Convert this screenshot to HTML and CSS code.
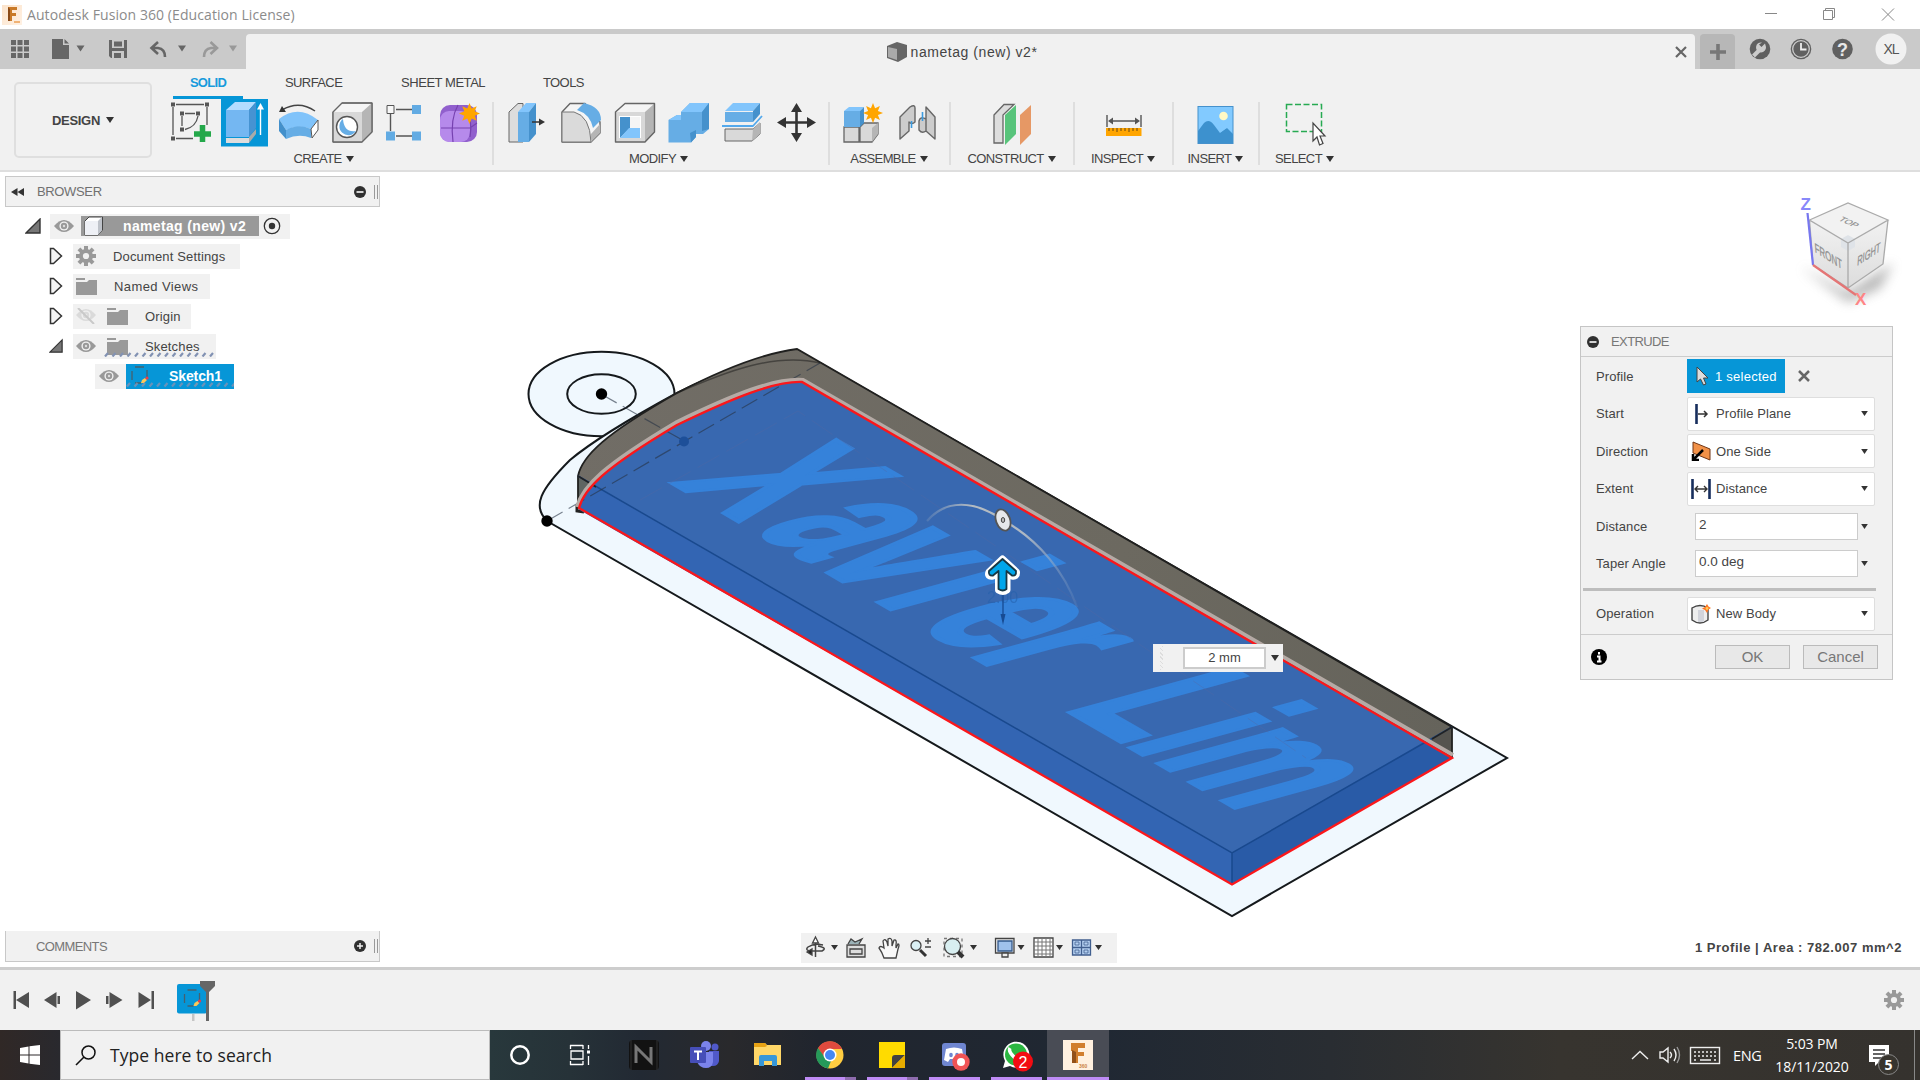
FILE: index.html
```html
<!DOCTYPE html>
<html lang="en">
<head>
<meta charset="utf-8">
<title>Autodesk Fusion 360 (Education License)</title>
<link rel="stylesheet" href="styles.css">
</head>
<body>
<svg class="defs" width="0" height="0">
  <defs>
    <symbol id="eye" viewBox="0 0 20 14"><path d="M0 7Q10-5 20 7Q10 19 0 7Z" fill="#999"/><circle cx="10" cy="7" r="4.6" fill="#f1f1f1"/><circle cx="10" cy="7" r="3.2" fill="#999"/><circle cx="10" cy="7" r="1.2" fill="#ddd"/></symbol>
    <symbol id="folder" viewBox="0 0 21 17"><path d="M0 0H9V2H0ZM0 4H11L13 2H21V17H0Z" fill="#999"/></symbol>
    <symbol id="gear" viewBox="-10 -10 20 20"><g fill="#999"><g id="teeth"><rect x="-2" y="-10" width="4" height="20"/><rect x="-10" y="-2" width="20" height="4"/></g><use href="#teeth" transform="rotate(45)"/><circle r="7"/></g><circle r="3.1" fill="#f1f1f1"/></symbol>
    <symbol id="closed" viewBox="0 0 14 18"><path d="M1.5 1.5H4.5L12.5 9L4.5 16.5H1.5Z" fill="#f4f4f4" stroke="#333" stroke-width="1.5"/></symbol>
    <symbol id="open" viewBox="0 0 16 16"><path d="M15 1V15H1Z" fill="#777" stroke="#333" stroke-width="1.4"/></symbol>
    <symbol id="down" viewBox="0 0 8 6"><path d="M0 0H8L4 6Z" fill="#333"/></symbol>
    <symbol id="minus" viewBox="0 0 12 12"><circle cx="6" cy="6" r="6" fill="#303030"/><path d="M2.5 6H9.5" stroke="#f1f1f1" stroke-width="1.7"/></symbol>
    <symbol id="plus" viewBox="0 0 12 12"><circle cx="6" cy="6" r="6" fill="#303030"/><path d="M3 6H9M6 3V9" stroke="#f1f1f1" stroke-width="1.5"/></symbol>
    <symbol id="star" viewBox="-11 -11 22 22"><path d="M0-11L2.3-5.3L7.6-7.6L5.4-2.3L11 0L5.4 2.3L7.6 7.6L2.3 5.3L0 11L-2.3 5.3L-7.6 7.6L-5.4 2.3L-11 0L-5.4-2.3L-7.6-7.6L-2.3-5.3Z" fill="#ffa500"/></symbol>
    <symbol id="sketch" viewBox="0 0 20 20"><path d="M2 5V14M5 1H14M17 4V11M5 17H11" fill="none" stroke="#46606e" stroke-width="1.3"/><path d="M11 17L12 14L15 12L17 14L14 17Z" fill="#ffc857"/><circle cx="17" cy="12" r="1.600" fill="#ed3b4b"/></symbol>
    <symbol id="hatch" viewBox="0 0 110 5"><path d="M2 4.500H112" stroke="#8292b3" stroke-width="0"/><path d="M1 4.500L4 1M8.500 4.500L11.500 1M16 4.500L19 1M23.500 4.500L26.500 1M31 4.500L34 1M38.500 4.500L41.500 1M46 4.500L49 1M53.500 4.500L56.500 1M61 4.500L64 1M68.500 4.500L71.500 1M76 4.500L79 1M83.500 4.500L86.500 1M91 4.500L94 1M98.500 4.500L101.500 1M106 4.500L109 1" stroke="#8292b3" stroke-width="2.200"/></symbol>
  </defs>
</svg>

<header class="titlebar">
  <svg width="20" height="20"><defs><linearGradient id="fbg" x2="1" y2="1"><stop stop-color="#fbe3cb"/><stop offset="1" stop-color="#fff1e3"/></linearGradient></defs><rect width="20" height="20" fill="url(#fbg)"/><path d="M6 2H15V5H10V8H14V11H10V16H6Z" fill="#c97a28"/><path d="M6 2L8 4V16H6Z" fill="#8a4a18"/><path d="M12 17H18" stroke="#f0b275" stroke-width="2"/></svg>
  <span class="app-name">Autodesk Fusion 360 (Education License)</span>
  <svg class="window-buttons" width="132" height="29" viewBox="1764 0 132 29" fill="none" stroke="#888"><path d="M1765 13.5H1777M1882 8.5L1894 20.5M1894 8.5L1882 20.5M1823.5 10.5H1832.5V19.5H1823.5ZM1825.5 10.5V8.5H1834.5V17.5H1832.5"/></svg>
</header>

<nav class="tabbar">
  <svg width="246" height="40" viewBox="0 29 246 40" fill="#666">
    <g><path d="M11 40h5v5h-5zM17.500 40h5v5h-5zM24 40h5v5h-5zM11 46.500h5v5h-5zM17.500 46.500h5v5h-5zM24 46.500h5v5h-5zM11 53h5v5h-5zM17.500 53h5v5h-5zM24 53h5v5h-5z"/></g>
    <path d="M52 39H63V45H69V59H52ZM64.500 39L69 43.500H64.500Z"/><path d="M76.500 45.500H84.500L80.500 51.500ZM178 45.500H186L182 51.500Z"/>
    <path fill-rule="evenodd" d="M109 40H127V58H111L109 56ZM112 40V48H124V40ZM114 41.500H122V46.500H114ZM112 51V58H124V51ZM114 53H121V58H114Z"/><rect x="115.500" y="54" width="2.500" height="4"/>
    <g fill="none" stroke="#666" stroke-width="2.600"><path d="M151 48H158Q165 49 165 57M158 42L151.500 48L158 54"/><path d="M217 48H211Q204 49 204 57M210.500 42L217 48L210.500 54" stroke="#999"/></g><path d="M229 45.500H237L233 51.500Z" fill="#999"/>
  </svg>
  <div class="doc-tab">
    <span class="doc-title"><svg width="20" height="20"><path d="M0 4L10 0L20 3V15L11 20L0 16Z" fill="#666"/><path d="M1 5L10 7V18L1 15Z" fill="#aaa"/></svg>nametag (new) v2*</span>
    <svg class="tab-x" width="12" height="12"><path d="M1 1L11 11M11 1L1 11" stroke="#666" stroke-width="2.200"/></svg>
  </div>
  <div class="new-tab"><svg width="16" height="16"><path d="M8 0V16M0 8H16" stroke="#777" stroke-width="3.600"/></svg></div>
  <svg width="185" height="40" viewBox="1735 29 185 40"><g fill="#606060"><circle cx="1760" cy="49" r="10.300"/><circle cx="1801" cy="49" r="10.300"/><circle cx="1842.500" cy="49" r="10.300"/></g>
    <path d="M1753.500 56L1760 49.500" stroke="#ccc" stroke-width="4"/><path d="M1765 43.500L1761.500 47L1759 44.500L1762 42.500A5 5 0 1 0 1766 47Z" fill="#ccc"/><circle cx="1801" cy="49" r="8.300" fill="none" stroke="#ccc" stroke-width="1.300"/><path d="M1801 43V49.500H1806.500" fill="none" stroke="#eee" stroke-width="1.800"/><text class="help-mark" x="1842.500" y="56" text-anchor="middle">?</text><circle cx="1891" cy="49" r="15.500" fill="#f1f1f1"/><text class="user" x="1891" y="54" text-anchor="middle">XL</text></svg>
</nav>

<section class="ribbon">
  <button class="workspace">DESIGN <svg width="8" height="6"><use href="#down"/></svg></button>
  <div class="ribbon-main">
    <div class="ribbon-tabs"><span class="active">SOLID</span><span class="t2">SURFACE</span><span class="t3">SHEET METAL</span><span class="t4">TOOLS</span></div>
    <div class="groups">
      <div class="group create"><svg width="332" height="52" viewBox="160 97 332 52">
        <rect x="221" y="99" width="47" height="47.500" fill="#0696d7"/>
        <g fill="none" stroke="#555" stroke-width="1.300"><path d="M176 104.500H204M173 107V135M176 138.500H193M207 107V125M185 113.500H195M182 116V126M198 116Q196 127 185 129.500"/></g>
        <path d="M171 102.500h4v4h-4zM205 102.500h4v4h-4zM171 136.500h4v4h-4zM180 111.500h4v4h-4zM196 111.500h4v4h-4zM180 127.500h4v4h-4z" fill="#555"/><path d="M194 134H211M202.500 125V142" stroke="#24a84a" stroke-width="5.500"/>
        <path d="M226 110L235 102H256L249 110Z" fill="#b3dcff"/><path d="M226 110H249V137H226Z" fill="#74b7f2"/><path d="M249 110L256 102V128L249 137Z" fill="#4693d2"/><path d="M226 138H249V143H226Z" fill="#ddd"/><path d="M249 137L256 129V134L249 143Z" fill="#aaa"/><path d="M260.500 135V108" stroke="#fff" stroke-width="1.400"/><path d="M257 109.500H264L260.500 103Z" fill="#fff"/>
        <path d="M279 119Q298 104 318 120L311 129Q299 124 286 130Z" fill="#80c3fa"/><path d="M279 119L286 130V139L279 131Z" fill="#4390cb"/><path d="M286 130Q299 123 311 129V138Q299 133 286 139Z" fill="#66ade5"/><path d="M311 129L318 120V130L312 138Z" fill="#fff" stroke="#555"/><path d="M282 110Q299 100 315 111" fill="none" stroke="#444" stroke-width="1.500"/><path d="M279 112L282 106L286 112Z" fill="#333"/>
        <g stroke="#666" stroke-linejoin="round"><path d="M333 112L342 103H372V132L362 142H333Z" fill="#f5f5f5"/><path d="M333 112H362V142H333Z" fill="#d8d8d8" stroke="none"/><path d="M362 112L372 103V132L362 142Z" fill="#b5b5b5" stroke="none"/><path d="M333 112L342 103H372V132L362 142H333Z" fill="none" stroke-width="1.400"/></g><circle cx="347" cy="127" r="10.500" fill="#fff" stroke="#555" stroke-width="1.400"/><path d="M343 119A9 9 0 1 0 356 131Q344 133 343 119Z" fill="#66ade5"/>
        <path d="M390.500 114V131M396 109.500H412M396 136H412" stroke="#555" stroke-width="1.400"/><path d="M387 105.500h7v8h-7z" fill="#f7f7f7" stroke="#555"/><path d="M412 105h9v9h-9zM386 131.500h9v9h-9zM412 131.500h9v9h-9z" fill="#62abe3"/>
        <rect x="440" y="105" width="37" height="37" rx="10" fill="#9160cd"/><rect x="440" y="111" width="30" height="31" rx="9" fill="#b68aeb"/><path d="M441 128H470L477 123M453 142Q450 119 458 105M470 137Q473 119 465 108" fill="none" stroke="#7642b0" stroke-width="1.200"/><use href="#star" x="459" y="103" width="21" height="21"/>
      </svg><b>CREATE <svg width="8" height="6"><use href="#down"/></svg></b></div>
      <div class="group modify"><svg width="334" height="52" viewBox="494 97 334 52" stroke-linejoin="round">
        <path d="M509 112L518 103.500H523V142H509Z" fill="#ddd" stroke="#666"/><path d="M518 112H529V142H518Z" fill="#66ade5"/><path d="M518 112L526 103H536L529 112Z" fill="#82c5fc"/><path d="M529 112L536 103V134L529 142Z" fill="#4591cc"/><path d="M532 122H540" stroke="#333" stroke-width="1.500"/><path d="M539 118.500L545 122L539 125.500Z" fill="#333"/>
        <path d="M562 112L570 103.500H585L600 122V133L591 142H562Z" fill="#f5f5f5" stroke="#666" stroke-width="1.400"/><path d="M562 112H574Q590 116 591 142H562Z" fill="#dadada" stroke="#777"/><path d="M591 142V134L600 124V133Z" fill="#b5b5b5"/><path d="M577 110L584 103Q601 107 601 120L593 128Q590 114 577 110Z" fill="#66ade5"/>
        <path d="M615.500 112L625 103.500H654.500V132L645 142H615.500Z" fill="#f5f5f5"/><path d="M615.500 112H645V142H615.500Z" fill="#d8d8d8"/><path d="M645 112L654.500 103.500V132L645 142Z" fill="#b5b5b5"/><path d="M615.500 112L625 103.500H654.500V132L645 142H615.500Z" fill="none" stroke="#666" stroke-width="1.400"/><rect x="619" y="116" width="22" height="22" fill="#fff"/><path d="M620 117H630V128L620 138Z" fill="#4591cc"/><path d="M620 138L629 128H640V138Z" fill="#82c5fc"/><path d="M630 117H640V128H630Z" fill="#f5f5f5"/>
        <path d="M668.500 120L677 115H681V112L690 103H709V129L703 134H696V137L691 142.500H668.500Z" fill="#66ade5"/><path d="M681 112L690 103H709L702 112ZM668.500 120L677 115H681V120Z" fill="#82c5fc"/><path d="M702 112L709 103V129L702 131ZM690 133L696 130V137L691 142.500Z" fill="#4591cc"/>
        <path d="M725 112H753V122H725Z" fill="#66ade5"/><path d="M725 111L733 103H760L753 111Z" fill="#82c5fc"/><path d="M753 111L760 103V114L753 122Z" fill="#4591cc"/><path d="M722 126H753L762 116" fill="none" stroke="#54a9ec" stroke-width="1.800"/><path d="M725 129H753L760 123V134L752 141H725Z" fill="#d9d9d9" stroke="#666"/><path d="M753 129L760 122V134L752 141Z" fill="#b5b5b5"/>
        <path d="M784 122.500H809M796.500 110V135" stroke="#333" stroke-width="2.600"/><path d="M777 122.500L786 117V128ZM816 122.500L807 117V128ZM796.500 103L791 112H802ZM796.500 142L791 133H802Z" fill="#333"/>
      </svg><b>MODIFY <svg width="8" height="6"><use href="#down"/></svg></b></div>
      <div class="group assemble"><svg width="119" height="52" viewBox="830 97 119 52">
        <path d="M844 127H859V142H844ZM860 127L864 123H878V134L872 142H860Z" fill="#d9d9d9" stroke="#666" stroke-width="1.300"/><path d="M872 128L878 123V134L872 142Z" fill="#b5b5b5"/><path d="M844 111H860V127H844Z" fill="#66ade5"/><path d="M844 111L849 107H864L860 111Z" fill="#82c5fc"/><path d="M860 111L864 107V123L860 127Z" fill="#4591cc"/><use href="#star" x="863" y="103" width="20" height="20"/>
        <g fill="#ccc" stroke="#666" stroke-width="1.400" stroke-linejoin="round"><path d="M900 117L910 107Q915 104 915 108V122Q912 125 909 122V131L900 139Z"/><path d="M926 107L935 117V139L926 131V119Q920 116 919 121V130Q922 134 926 131Z"/></g><path d="M911.500 121V128M922.500 112V121" stroke="#3b9be0" stroke-width="1.600"/>
      </svg><b>ASSEMBLE <svg width="8" height="6"><use href="#down"/></svg></b></div>
      <div class="group construct"><svg width="122" height="52" viewBox="951 97 122 52"><path d="M994 115L1004 104.500H1014L1003 115V143H994Z" fill="#ddd" stroke="#666" stroke-width="1.300"/><path d="M1005 115L1016 105V134L1005 145Z" fill="#58c47b"/><path d="M1020 115L1031 105V134L1020 145Z" fill="#e69865"/></svg><b>CONSTRUCT <svg width="8" height="6"><use href="#down"/></svg></b></div>
      <div class="group inspect"><svg width="97" height="52" viewBox="1075 97 97 52"><path d="M1107 115V127M1141 115V127M1110 121H1138" stroke="#555" stroke-width="1.400"/><path d="M1108 121L1113 117.500V124.500ZM1140 121L1135 117.500V124.500Z" fill="#555"/><rect x="1106" y="128" width="35.500" height="8" fill="#ffa500"/><path d="M1109 128V131M1113 128V131M1117 128V132M1121 128V131M1125 128V131M1129 128V132M1133 128V131M1137 128V131" stroke="#664712"/></svg><b>INSPECT <svg width="8" height="6"><use href="#down"/></svg></b></div>
      <div class="group insert"><svg width="84" height="52" viewBox="1174 97 84 52"><rect x="1198" y="106.500" width="35" height="37" fill="#82caff" stroke="#4591cc"/><path d="M1198 131L1204 123Q1209 118 1214 125L1220 133L1226 129L1233 137V143H1198Z" fill="#3d91ce"/><path d="M1218 135L1227 128L1233 134V143H1218Z" fill="#3d91ce"/><circle cx="1223.500" cy="116" r="4.300" fill="#fff9c5"/></svg><b>INSERT <svg width="8" height="6"><use href="#down"/></svg></b></div>
      <div class="group select"><svg width="92" height="52" viewBox="1260 97 92 52"><rect x="1286.500" y="104.500" width="35" height="27" fill="none" stroke="#27aa52" stroke-width="1.500" stroke-dasharray="6 2.500"/><path d="M1313 123V141L1317 137L1319.500 145L1323 143.500L1320 136H1325Z" fill="#fff" stroke="#444" stroke-width="1.200"/></svg><b>SELECT <svg width="8" height="6"><use href="#down"/></svg></b></div>
    </div>
  </div>
</section>

<main class="viewport">
  <svg class="scene" width="1920" height="795" viewBox="0 172 1920 795">
    <defs>
      <linearGradient id="brown" x1="580" y1="400" x2="1450" y2="740" gradientUnits="userSpaceOnUse"><stop stop-color="#716d66"/><stop offset=".6" stop-color="#6c6960"/><stop offset="1" stop-color="#65635b"/></linearGradient>
      <linearGradient id="arcfade" x1="927" x2="1077" y1="0" y2="0" gradientUnits="userSpaceOnUse"><stop stop-color="#a9b4c0" stop-opacity=".2"/><stop offset=".3" stop-color="#b5bcc2"/><stop offset=".65" stop-color="#aeb8c3"/><stop offset="1" stop-color="#87a0c4" stop-opacity=".15"/></linearGradient>
      <filter id="soft" x="-50%" y="-50%" width="200%" height="200%"><feGaussianBlur stdDeviation="6"/></filter>
      <linearGradient id="face" x2="0" y2="1"><stop stop-color="#f2f2f2"/><stop offset="1" stop-color="#dcdcdc"/></linearGradient>
    </defs>
    <g stroke="#15191c" stroke-width="2">
      <ellipse cx="601.500" cy="394" rx="73" ry="42.300" fill="#f0f8fe"/><ellipse cx="601.500" cy="394" rx="34.300" ry="19.800" fill="#f0f8fe"/>
      <path d="M547 521C532 506 540 490 570 460C595 439 642 412 677 393C715 373 775 352 820 363L1507 758L1232 916Z" fill="#f0f8fe"/>
    </g>
    <path d="M577 505V511L584 512" fill="none" stroke="#222" stroke-width="3"/>
    <path d="M578 476C582 456 605 434 677 393C725 368 765 353 797 349L1452 727V758L1232 884L578 507Z" fill="url(#brown)"/>
    <path d="M578 476L605 491L578 507Z" fill="#5f6562"/><path d="M1452 727L1428 741L1452 758Z" fill="#55544f"/>
    <path d="M677 393C725 372 775 352 820 363" fill="none" stroke="#45433f" stroke-width="1.500"/>
    <path d="M578 507V476C582 456 605 434 677 393C725 368 765 353 797 349L1452 727V758" fill="none" stroke="#20201f" stroke-width="1.800"/>
    <path d="M578 509C584 489 603 469 677 425C735 397 775 381 802 382L1452 758L1232 884Z" fill="#3868b0"/>
    <path d="M590 484L1232 853V884L579 508Q580 498 590 484Z" fill="#3365b3"/><path d="M1232 853L1426 741L1452 758L1232 884Z" fill="#2a5ba7"/>
    <g class="nametag" transform="matrix(.5196 .3 -1.175 .322 669 481)"><text x="4 160 266 388 470 573 757 873 926" y="0"><tspan>Xavier</tspan><tspan>Lim</tspan></text></g>
    <path d="M1232 853L1426 741L1452 758L1232 884Z" fill="#2a5ba7" opacity=".75"/>
    <path d="M578 476L1232 853L1452 727M1232 853V884" fill="none" stroke="#19498e" stroke-width="1.500"/><path d="M578 476L596 487M1432 739L1452 727" stroke="#222" stroke-width="1.500"/>
    <path d="M601 394L684 441M547 521L820 363" stroke="#273344" stroke-width="1.200" stroke-dasharray="18 7" opacity=".6"/>
    <path d="M640 500L798 411L1306 758" fill="none" stroke="#5568a1" stroke-dasharray="25 8" opacity=".35"/>
    <path d="M577 507C583 486 603 466 677 422C735 394 775 378 803 380L1453 755" fill="none" stroke="#b5aaa5" stroke-width="4"/>
    <path d="M579 508C584 489 603 469 677 425C735 397 775 381 802 382L1452 758L1232 884.500Z" fill="none" stroke="#fb171b" stroke-width="2.300"/>
    <circle cx="601.500" cy="394" r="5.700"/><circle cx="547" cy="521" r="5.700"/><circle cx="684" cy="441.500" r="5" fill="#1d4f99"/>
    <path d="M927 521C946 499 974 500 1003 520C1040 541 1065 573 1077 607" fill="none" stroke="url(#arcfade)" stroke-width="2.200"/>
    <ellipse cx="1003" cy="520" rx="7" ry="11" transform="rotate(-20 1003 520)" fill="#e6e8eb" stroke="#555" stroke-width="1.800"/><ellipse cx="1003" cy="520" rx="1.700" ry="2.500" fill="#bbb" stroke="#444"/>
    <text class="dimension" x="987" y="603">2.00</text><path d="M1003 592V620" stroke="#174b93" stroke-width="1.300"/><path d="M1000.500 614H1005.500L1003 625Z" fill="#174b93"/>
    <path d="M1002.500 559L1016.500 572Q1017 577 1012 576L1007 572V590Q1003 593 998.500 590V572L993 576Q987 577 989 572Z" fill="#fff" stroke="#fff" stroke-width="7" stroke-linejoin="round"/><path d="M1002.500 559L1016 571Q1016.500 576.500 1012 575.500L1006.500 571V589Q1003 592 998.500 589V571L993 575.500Q988 576 989 571Z" fill="#00a6ea" stroke="#173844" stroke-width="1.800" stroke-linejoin="round"/>
    <path d="M1801 267L1848 292L1893 263L1880 288L1848 302Z" fill="#777" opacity=".55" filter="url(#soft)"/>
    <path d="M1809.500 220L1848 203L1888 220L1848 243Z" fill="#f2f2f2"/><path d="M1809.500 220L1848 243V288L1813 265Z" fill="url(#face)"/><path d="M1888 220L1848 243V288L1883 264Z" fill="url(#face)"/>
    <path d="M1848 235L1855 239V247L1848 251L1841 247V239Z" fill="#dfe3e8"/>
    <path d="M1809.500 220L1848 203L1888 220L1848 243ZM1848 243V288M1888 220L1883 264L1848 288L1813 265L1809.500 220" fill="none" stroke="#aaa" stroke-width="1.300"/>
    <g class="cube-text"><text transform="matrix(.7 .32 -.6 .42 1838 220)">TOP</text><text transform="matrix(.66 .42 .08 1.1 1815 252)">FRONT</text><text transform="matrix(.62 -.4 -.08 1.1 1857 266)">RIGHT</text></g>
    <path d="M1807.500 213L1813 265" stroke="#7777ef" stroke-width="2.200"/><path d="M1813 265L1856 295" stroke="#e57575" stroke-width="2.200"/><text class="axis" x="1800.500" y="210" fill="#8888fa">Z</text><text class="axis" x="1855" y="305" fill="#ff8585">X</text>
  </svg>

  <section class="browser">
    <div class="panel-head"><svg width="13" height="8"><path d="M6.500 0V8L0 4ZM13 0V8L6.500 4Z" fill="#333"/></svg><span class="caps">BROWSER</span><svg class="end" width="12" height="12"><use href="#minus"/></svg><i></i></div>
    <div class="tree">
      <div class="row root"><svg width="16" height="16"><use href="#open"/></svg><div class="chip"><svg width="20" height="14"><use href="#eye"/></svg><span class="root-name"><svg width="20" height="20"><path d="M1 5L5 1H18.500V14L14 19H1Z" fill="#fff" stroke="#444"/><path d="M14 5L18 1V14L14 19Z" fill="#bec2c9"/><path d="M1 5H14V19H1Z" fill="#eef0f5"/></svg>nametag (new) v2</span><svg width="18" height="18"><circle cx="9" cy="9" r="7.700" fill="none" stroke="#333" stroke-width="1.300"/><circle cx="9" cy="9" r="3.200" fill="#333"/></svg></div></div>
      <div class="row"><svg width="14" height="18"><use href="#closed"/></svg><div class="chip w167"><svg width="20" height="20"><use href="#gear"/></svg><span class="item">Document Settings</span></div></div>
      <div class="row"><svg width="14" height="18"><use href="#closed"/></svg><div class="chip w137"><svg width="21" height="17"><use href="#folder"/></svg><span class="item named">Named Views</span></div></div>
      <div class="row"><svg width="14" height="18"><use href="#closed"/></svg><div class="chip w118"><svg width="20" height="16" opacity=".25"><use href="#eye" height="14"/><path d="M2 0L18 16" stroke="#555" stroke-width="2"/></svg><svg class="fold" width="21" height="17"><use href="#folder"/></svg><span class="item">Origin</span></div></div>
      <div class="row"><svg width="14" height="16"><use href="#open"/></svg><div class="chip w143"><svg width="20" height="14"><use href="#eye"/></svg><svg class="fold" width="21" height="17"><use href="#folder"/></svg><span class="item">Sketches</span><svg class="hatch" width="110" height="5"><use href="#hatch"/></svg></div></div>
      <div class="row leaf"><div class="chip"><svg width="20" height="14"><use href="#eye"/></svg><span class="sketch-name"><svg width="20" height="20"><use href="#sketch"/></svg>Sketch1<svg class="hatch" width="110" height="5"><use href="#hatch"/></svg></span></div></div>
    </div>
  </section>

  <section class="extrude">
    <div class="ex-head"><svg width="12" height="12"><use href="#minus"/></svg><span class="caps">EXTRUDE</span></div>
    <div class="field"><label>Profile</label><span class="selected"><svg width="13" height="20"><path d="M1 1V16L4.500 13L7.500 19L10 18L7.500 12H12Z" fill="#ddd" stroke="#444"/></svg>1 selected</span><svg class="clear" width="12" height="12"><path d="M1 1L11 11M11 1L1 11" stroke="#666" stroke-width="2.500"/></svg></div>
    <div class="field"><label>Start</label><span class="combo"><svg width="20" height="20"><path d="M5.500 0V20" stroke="#172e5d" stroke-width="2.600"/><path d="M7 10H16M13 7L16 10L13 13" fill="none" stroke="#333" stroke-width="1.500"/></svg>Profile Plane<svg class="drop" width="7" height="5"><use href="#down"/></svg></span></div>
    <div class="field"><label>Direction</label><span class="combo"><svg width="20" height="20"><path d="M2 1L19 8V19L2 12Z" fill="#f29147" stroke="#713716"/><path d="M12 9L3 18M2 13V19H8" fill="none" stroke="#000" stroke-width="2.500"/></svg>One Side<svg class="drop" width="7" height="5"><use href="#down"/></svg></span></div>
    <div class="field"><label>Extent</label><span class="combo"><svg width="20" height="20"><path d="M1.500 0V20M18.500 0V20" stroke="#172e5d" stroke-width="2.600"/><path d="M4 10H16M7 7L4 10L7 13M13 7L16 10L13 13" fill="none" stroke="#333" stroke-width="1.400"/></svg>Distance<svg class="drop" width="7" height="5"><use href="#down"/></svg></span></div>
    <div class="field"><label>Distance</label><span class="entry">2</span><svg width="7" height="5"><use href="#down"/></svg></div>
    <div class="field"><label>Taper Angle</label><span class="entry">0.0 deg</span><svg width="7" height="5"><use href="#down"/></svg></div>
    <hr>
    <div class="field operation"><label>Operation</label><span class="combo"><svg width="20" height="20"><path d="M1 4Q9-1 17 4V16Q9 22 1 16Z" fill="#eee" stroke="#444" stroke-width="1.400"/><path d="M7 6H13V18H7Z" fill="#d2d4db"/><path d="M16 0L17.500 2.500L20 4L17.500 5.500L16 9L14 6L11 4.500L14 3Z" fill="#ff7623"/><circle cx="16" cy="4.500" r="1.400" fill="#ffcd59"/></svg>New Body<svg class="drop" width="7" height="5"><use href="#down"/></svg></span></div>
    <div class="actions"><svg width="16" height="16"><circle cx="8" cy="8" r="8"/><path d="M8 3V5.500M6 7.500H8.500V12M6 12.500H10.500" stroke="#fff" stroke-width="2" fill="none"/></svg><button>OK</button><button>Cancel</button></div>
  </section>

  <div class="value-box"><i></i><span>2 mm</span><svg width="8" height="6"><use href="#down"/></svg></div>

  <div class="comments"><span class="caps">COMMENTS</span><svg class="end" width="12" height="12"><use href="#plus"/></svg><i></i></div>
  <div class="navbar"><svg width="316" height="30" viewBox="801 933 316 30" fill="none" stroke="#444" stroke-width="1.300">
    <path d="M815.500 940V957M823 945Q814 943 808 947Q804 951 813 951H822Q828 948 818 946" stroke-width="1.500"/><path d="M815.500 937L818.500 943H812.500Z" fill="#fff"/><path d="M807 952L812 949V955Z" fill="#222"/>
    <path d="M847 945H865V957H847ZM850 949H862V954H850Z" fill="#ddd"/><path d="M848 944L851 939L855 942L862 939L859 944" fill="#9cb3b8"/>
    <path d="M884 958Q882 952 879 948Q880 945 884 948L883 941Q885 938 887 942L888 946L888 939Q891 937 892 941V946L894 940Q897 939 896 945V948L898 944Q900 944 898 949L896 958Z" fill="#f8f8f8"/>
    <circle cx="916" cy="945.500" r="5" fill="#daf0f4"/><path d="M920 950L926 956" stroke="#333" stroke-width="3"/><path d="M925 941H931M928 938V944M925 947H931"/>
    <rect x="944" y="938.500" width="18" height="18" stroke="#777" stroke-dasharray="3 3"/><circle cx="952.500" cy="946.500" r="8" fill="#d8eef0"/><path d="M958 952L963 957" stroke="#333" stroke-width="4"/>
    <path d="M995.500 938.500H1014V953H995.500Z" fill="#eee"/><path d="M998 941H1012V951H998Z" fill="#9fc1eb" stroke="#35598b"/><path d="M1002 953H1008V957H1002Z" fill="#eee"/>
    <path d="M1034 938H1053V957H1034Z" fill="#fff"/><path d="M1038 938V957M1042 938V957M1046 938V957M1050 938V957M1034 942H1053M1034 946H1053M1034 950H1053M1034 954H1053" stroke="#777" stroke-width="1"/>
    <g fill="#b4cff0" stroke="#415f8f"><path d="M1072.500 940H1090.500V955H1072.500Z"/><path d="M1081.500 940V955M1072.500 947.500H1090.500"/><path d="M1075 942h4v3h-4zM1084 942h4v3h-4zM1075 950h4v3h-4zM1084 950h4v3h-4z" stroke-width=".8"/></g>
    <path d="M831 945h7l-3.500 5zM970 945h7l-3.500 5zM1017.500 945h7l-3.500 5zM1056 945h7l-3.500 5zM1095 945h7l-3.500 5z" fill="#333" stroke="none"/>
  </svg></div>
  <div class="status">1 Profile | Area : 782.007 mm^2</div>
</main>

<footer class="timeline">
  <svg width="230" height="60" viewBox="0 970 230 60" fill="#505050"><path d="M13.500 991H16V1009H13.500ZM29 992V1008L16 1000ZM56.500 992V1008L44 1000ZM57.500 996H60V1004H57.500ZM76 991L91 1000L76 1009.500ZM106 996H108.500V1004H106ZM109.500 992L122.500 1000L109.500 1008ZM138.500 992L151 1000L138.500 1008ZM151.500 991H154V1009H151.500Z"/><rect x="177" y="984" width="30" height="29.500" rx="2" fill="#0696d7"/><use href="#sketch" x="182" y="989" width="21" height="20"/><path d="M192 1014H194.500V1021H192Z" fill="#c5c5c5"/><path d="M200 981H215V986L209 992V1021H206V992L200 986Z" fill="#666"/></svg>
  <svg width="20" height="20"><use href="#gear"/></svg>
</footer>

<div class="taskbar">
  <div class="start"><svg width="20" height="20" fill="#fff"><path d="M0 3L8.500 1.500V9.500H0ZM9.500 1.300L20 0V9.500H9.500ZM0 10.500H8.500V18.500L0 17ZM9.500 10.500H20V20L9.500 18.700Z"/></svg></div>
  <div class="search"><svg width="21" height="21"><circle cx="13.500" cy="7.500" r="6.500" fill="none" stroke="#111" stroke-width="1.500"/><path d="M9 12L1 20" stroke="#111" stroke-width="1.600"/></svg><span>Type here to search</span></div>
  <div class="apps">
    <svg viewBox="0 0 62 50"><circle cx="31" cy="25" r="8.700" fill="none" stroke="#fff" stroke-width="2.500"/></svg>
    <svg viewBox="0 0 62 50"><path d="M19 15.500H32M19 34.500H32M19.500 15V19M32 15V19M19.500 31V35M32 31V35M20 21H32V29H20ZM37.500 15V19M37.500 26V35" fill="none" stroke="#fff" stroke-width="1.300"/><path d="M36 20.500h3v3h-3z" fill="#fff"/></svg>
    <svg viewBox="0 0 62 50"><rect x="16" y="10" width="30" height="30" rx="4" fill="#121212"/><path d="M18 10V40M44 10V40" stroke="#303030"/><path d="M23 33V17L38 32V17" fill="none" stroke="#777" stroke-width="3"/></svg>
    <svg viewBox="0 0 62 50"><circle cx="40" cy="17" r="3.500" fill="#5059c9"/><circle cx="31" cy="16" r="5" fill="#7b83eb"/><path d="M34 21H44V31Q43 36 38 36H34Z" fill="#5059c9"/><path d="M22 22H38V32Q37 38 31 38Q25 38 22 32Z" fill="#7b83eb"/><rect x="15" y="17" width="16" height="16" rx="1" fill="#464eb8"/><path d="M19 21.500H27M23 21.500V30" stroke="#fff" stroke-width="2"/></svg>
    <svg viewBox="0 0 62 50"><path d="M17 13H28L30 15H44V35H17Z" fill="#ffd768"/><path d="M17 13H28L30 16L28 17H17Z" fill="#e7a214"/><path d="M22 36V27Q22 25 24 25H38Q40 25 40 27V36H35V31H27V36Z" fill="#3797d8"/></svg>
    <svg viewBox="0 0 62 50" class="running split"><circle cx="31" cy="25" r="13.500" fill="#ffcd41"/><path d="M19 18A13.500 13.500 0 0 1 43 19H31L26 29Z" fill="#df4a3e"/><path d="M19 18L27 29L32 31L29 38.400A13.500 13.500 0 0 1 19 18Z" fill="#25995a"/><circle cx="31" cy="25" r="6.500" fill="#fff"/><circle cx="31" cy="25" r="5" fill="#4487f3"/></svg>
    <svg viewBox="0 0 62 50" class="running split"><path d="M18 12H44V38H18Z" fill="#ffdb00"/><path d="M31 38V28Q31 25 34 25H44Z" fill="#424242"/><path d="M31 38L44 25V38Z" fill="#e7ac00"/></svg>
    <svg viewBox="0 0 62 50" class="running"><rect x="19" y="13" width="24" height="23" rx="3" fill="#6f86d1"/><path d="M23 19Q31 16 39 19L41 30L36 32L34 29H27L25 32L21 30Z" fill="#fff"/><ellipse cx="28" cy="25" rx="1.800" ry="2.200" fill="#6f86d1"/><ellipse cx="34" cy="25" rx="1.800" ry="2.200" fill="#6f86d1"/><circle cx="38" cy="32" r="8.700" fill="#f05456"/><circle cx="38" cy="32" r="4" fill="#fff"/></svg>
    <svg viewBox="0 0 62 50" class="running"><path d="M18 38L20 31A13 13 0 1 1 25 36Z" fill="#fff"/><circle cx="31" cy="24.500" r="11" fill="#2bb741"/><path d="M25 18Q23 21 29 27Q35 33 38 29" fill="none" stroke="#fff" stroke-width="3.500"/><circle cx="38" cy="31.500" r="10" fill="#f30c12"/><text class="badge" x="38" y="37.500" text-anchor="middle">2</text></svg>
    <svg viewBox="0 0 62 50" class="running current"><rect x="16" y="10" width="30" height="30" fill="#fff0df"/><path d="M24 13H38V18H31V22H37V26H31V33H26V21H24Z" fill="#d17e2d"/><path d="M25 20L29 22V33H25Z" fill="#925019"/><text class="tiny" x="32" y="38">360</text></svg>
  </div>
  <svg class="tray-icons" width="92" height="50" viewBox="1630 1030 92 50" fill="none" stroke="#eee" stroke-width="1.400"><path d="M1632 1059L1640 1051.500L1648 1059"/><path d="M1660 1052H1663L1668 1048V1062L1663 1058H1660ZM1670 1052Q1673 1055 1670 1058M1674 1049Q1678 1055 1674 1061"/><path d="M1677 1047Q1682 1055 1677 1063" stroke="#999"/><rect x="1690.500" y="1047.500" width="29" height="16"/><path d="M1694 1052H1717M1694 1056H1717" stroke-dasharray="2 2"/><path d="M1694 1060H1696M1700 1060H1711M1714 1060H1716"/></svg>
  <span class="lang">ENG</span>
  <div class="clock"><span>5:03 PM</span><span>18/11/2020</span></div>
  <svg class="notice" width="36" height="50" viewBox="1866 1030 36 50"><path d="M1869 1045H1889V1062H1879L1875 1066V1062H1869Z" fill="#fff"/><path d="M1873 1050H1885M1873 1054H1885M1873 1058H1883" stroke="#333" stroke-width="1.300"/><circle cx="1888.500" cy="1064.500" r="10" fill="#38352f" stroke="#888"/><text class="count" x="1888.500" y="1070" text-anchor="middle">5</text></svg>
  <i class="peek"></i>
</div>
</body>
</html>
```
FILE: styles.css
```css
* { box-sizing: border-box; }
body { margin: 0; width: 1920px; height: 1080px; overflow: hidden; background: #fff; color: #444; font: 13px "Liberation Sans", Arial, sans-serif; }
svg { display: block; flex: none; }
button { font: inherit; color: inherit; }
.defs { position: absolute; }
.caps, .ribbon-tabs, .group b, .workspace { letter-spacing: -.6px; white-space: nowrap; }

.titlebar { height: 29px; display: flex; align-items: center; padding: 0 24px 0 2px; background: #fff; }
.app-name { margin-left: 5px; font: 14px "Open Sans", "Noto Sans", sans-serif; letter-spacing: .08px; color: #8b8b8b; }
.window-buttons { margin-left: auto; }

.tabbar { height: 40px; display: flex; align-items: stretch; background: #cacaca; }
.doc-tab { flex: 1; margin-top: 5px; background: #f1f1f1; border-radius: 4px 4px 0 0; display: flex; align-items: center; justify-content: center; position: relative; }
.doc-title { display: flex; align-items: center; gap: 4px; font-size: 14px; margin-right: 17px; padding-top: 1px; letter-spacing: .55px; }
.tab-x { position: absolute; right: 8px; top: 12px; }
.new-tab { width: 35px; margin: 5px 0 0 5px; border-radius: 4px 4px 0 0; background: #b7b7b7; display: grid; place-items: center; }
.help-mark { font: bold 18px "Liberation Sans", sans-serif; fill: #e8e8e8; }
.user { font: 14px "Liberation Sans Narrow", "Liberation Sans", sans-serif; letter-spacing: -1px; fill: #555; }

.ribbon { height: 103px; display: flex; background: #f1f1f1; border-bottom: 2px solid #dedede; }
.workspace { width: 138px; height: 76px; margin: 13px 8px 0 14px; background: #f1f1f1; border: 2px solid #dfdfdf; border-radius: 5px; display: flex; align-items: center; justify-content: center; gap: 6px; font-weight: bold; letter-spacing: -.3px; padding: 0; }
.ribbon-tabs { height: 28px; display: flex; position: relative; line-height: 27px; }
.ribbon-tabs .active { width: 70px; margin-left: 13px; text-align: center; color: #189bdc; font-weight: bold; letter-spacing: -.7px; border-bottom: 3px solid #0696d7; height: 30px; }
.t2 { margin-left: 42px; width: 116px; }
.t3 { width: 142px; letter-spacing: -.45px; }
.groups { display: flex; }
.group { display: flex; flex-direction: column; align-items: flex-start; position: relative; }
.group::after { content: ""; position: absolute; right: 0; top: 5px; width: 2px; height: 63px; background: #dedede; }
.group:last-child::after { display: none; }
.group b { display: flex; gap: 4px; align-items: center; align-self: center; height: 19px; font-weight: normal; margin-right: 3px; }
.create b, .modify b { margin-right: 7px; }
.create { width: 334px; } .modify { width: 336px; } .assemble { width: 121px; } .construct { width: 124px; } .inspect { width: 99px; } .insert { width: 86px; } .select { width: 92px; }

.viewport { position: relative; height: 795px; background: #fff; }
.scene { position: absolute; inset: 0; }
.nametag { font: bold 200px "Liberation Sans", Arial, sans-serif; fill: #3582da; stroke: #3582da; stroke-width: 5px; stroke-linejoin: miter; }
.dimension { font-size: 16px; fill: #2460ab; opacity: .55; }
.cube-text { font-size: 12px; fill: #888; stroke: #999; stroke-width: .3px; }
.axis { font-size: 17px; font-weight: bold; }

.browser { position: absolute; left: 5px; top: 4px; width: 375px; }
.panel-head { height: 31px; border: 1px solid #c8c8c8; background: #f1f1f1; display: flex; align-items: center; padding-left: 5px; color: #707070; }
.panel-head .caps { margin-left: 13px; letter-spacing: -.35px; }
.end { margin-left: auto; }
.panel-head i, .comments i { width: 4px; height: 14px; margin: 0 1px 0 8px; border: solid #999; border-width: 0 1px; }
.tree { padding-top: 4px; }
.row { height: 30px; display: flex; align-items: center; gap: 11px; padding-left: 44px; }
.row.root { padding-left: 20px; gap: 9px; }
.chip { height: 25px; background: #f1f1f1; display: flex; align-items: center; padding-left: 3px; position: relative; }
.root .chip { width: 240px; padding-left: 4px; gap: 5px; }
.row:not(.root) .chip { margin-left: -1px; }
.root .chip > svg { margin-right: 2px; }
.root .chip > svg:last-child { margin-left: -3px; }
.root-name { width: 178px; height: 20px; margin: 0 2px 0 0; padding-left: 3px; gap: 19px; display: flex; align-items: center; background: #999; color: #fff; font: bold 14px "Liberation Sans", sans-serif; letter-spacing: .35px; white-space: nowrap; }
.w167 { width: 167px; } .w137 { width: 137px; } .w118 { width: 118px; } .w143 { width: 143px; }
.item { margin-left: 17px; letter-spacing: .15px; white-space: nowrap; }
.named { letter-spacing: .4px; }
.fold { margin-left: 11px; }
.hatch { position: absolute; left: 31px; bottom: 2px; }
.row.leaf { padding-left: 91px; }
.leaf .chip { padding-left: 4px; }
.sketch-name { position: relative; width: 108px; height: 25px; margin-left: 7px; padding-left: 4px; gap: 19px; display: flex; align-items: center; background: #0696d7; color: #fff; font: bold 14px "Liberation Sans", sans-serif; letter-spacing: -.1px; overflow: hidden; }
.sketch-name .hatch { left: 0; opacity: .8; }

.extrude { position: absolute; left: 1580px; top: 154px; width: 313px; height: 354px; border: 1px solid #c5c5c5; background: #f1f1f1; }
.ex-head { height: 30px; display: flex; align-items: center; gap: 12px; padding-left: 6px; border-bottom: 1px solid #ccc; color: #777; }
.field { height: 37.500px; display: flex; align-items: center; padding: 1px 0 0 15px; }
.field label { width: 91px; letter-spacing: .1px; }
.selected { width: 98px; height: 34px; background: #0696d7; color: #fff; display: flex; align-items: center; gap: 6px; padding-left: 9px; letter-spacing: .25px; }
.clear { margin-left: 13px; }
.combo { width: 188px; height: 34px; display: flex; align-items: center; gap: 5px; padding: 0 6px 0 3px; background: #fff; border: 1.500px solid #dedede; border-radius: 2px; letter-spacing: .1px; }
.drop { margin-left: auto; }
.entry { width: 163px; height: 27px; margin: 0 3px 0 8px; padding: 3px; border: 1.500px solid #ccc; background: #fff; font-size: 13.500px; }
.extrude hr { width: 293px; height: 3px; margin: 5.500px 0 3.500px 2px; border: 0; background: #bdbdbd; }
.operation { height: 38px; }
.actions { height: 45px; margin-top: 2px; padding: 0 14px 1px 10px; display: flex; align-items: center; gap: 13px; border-top: 1px solid #ccc; }
.actions svg { margin-right: auto; }
.actions button { width: 75px; height: 24px; border: 1px solid #bbb; background: #e8e8e8; color: #777; font-size: 15px; padding: 0; }

.value-box { position: absolute; left: 1153px; top: 472px; width: 130px; height: 28px; background: #f1f1f1; display: flex; align-items: center; }
.value-box i { width: 3px; height: 24px; margin: 0 20px 0 7px; background: repeating-linear-gradient(45deg, #ddd 0 1px, transparent 1px 3px); }
.value-box span { width: 83px; height: 22px; line-height: 17px; border: 2px solid #ccc; background: #fff; text-align: center; margin-right: 5px; }
.comments { position: absolute; left: 5px; top: 759px; width: 375px; height: 31px; padding-left: 30px; display: flex; align-items: center; background: #f1f1f1; border: solid #c8c8c8; border-width: 0 1px 1px; color: #777; }
.navbar { position: absolute; left: 801px; top: 761px; background: #f1f1f1; }
.status { position: absolute; right: 18px; top: 768px; font-weight: bold; font-size: 13px; letter-spacing: .53px; }

.timeline { height: 63px; border-top: 3px solid #cdcdcd; background: #f1f1f1; display: flex; align-items: center; justify-content: space-between; padding-right: 16px; }

.taskbar { height: 50px; display: flex; align-items: center; background: linear-gradient(90deg, #302826 0, #29292e 60px, #28383c 490px, #263238 570px, #222933 640px, #29292c 730px, #20252e 820px, #202833 1100px, #292d32 1330px, #37342f 1560px, #35322e 1920px); color: #fff; font-family: "Open Sans", "Noto Sans", sans-serif; }
.start { width: 60px; display: grid; place-items: center; }
.search { width: 430px; height: 50px; background: #f1f1f1; border: 1px solid #bbb; display: flex; align-items: center; padding-left: 14px; gap: 14px; color: #222; font-size: 17.500px; }
.search span { letter-spacing: .05px; }
.apps { display: flex; margin-left: -1px; }
.apps svg { width: 62px; height: 50px; }
.running { background: linear-gradient(#be8bf5, #be8bf5) 6px 47px / 51px 3px no-repeat; }
.split { background: linear-gradient(90deg, #be8bf5 40px, #8e6cae 40px) 6px 47px / 51px 3px no-repeat; }
.current { background-color: #494c55; background-position: 0 47px; background-size: 62px 3px; }
.badge { font: 16px "Liberation Sans", sans-serif; fill: #fff; }
.tiny { font: bold 5px "Liberation Sans", sans-serif; fill: #cc8343; }
.tray-icons { margin-left: auto; }
.lang { margin-left: 11px; font-size: 14.500px; width: 30px; letter-spacing: -.3px; }
.clock { width: 78px; margin: 0 0 1px 10px; display: flex; flex-direction: column; text-align: center; font-size: 14px; line-height: 23px; letter-spacing: -.1px; }
.notice { margin: 0 12px 0 15px; }
.peek { width: 1px; height: 50px; margin-right: 5px; background: #888; }
.count { font: bold 14px "Open Sans", sans-serif; fill: #fff; }
```
